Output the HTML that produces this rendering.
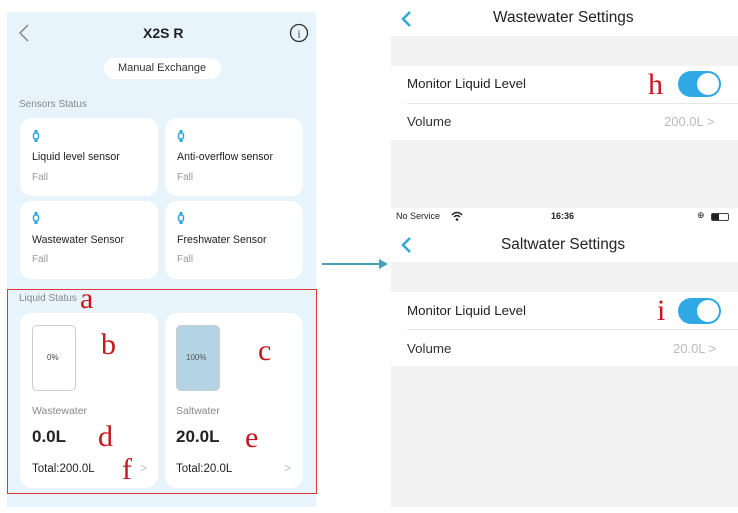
<!DOCTYPE html>
<html><head><style>
*{margin:0;padding:0;box-sizing:border-box}
body{width:738px;height:513px;background:#fff;position:relative;overflow:hidden;font-family:"Liberation Sans",sans-serif}
.a{position:absolute}
.lp{left:7px;top:12px;width:309px;height:495px;background:#e7f4fb}
.card{position:absolute;background:#fff;border-radius:12px}
.t{position:absolute;white-space:nowrap}
.ic{position:absolute;width:8px;height:12px}
.red{color:#c8161d;font-family:"Liberation Serif",serif;font-size:30px;position:absolute;line-height:1}
.g{background:#f2f2f2}
.row{position:absolute;left:391px;width:347px;background:#fff}
.tog{position:absolute;width:43px;height:26px;border-radius:13px;background:#2fa9e6}
.tog:after{content:"";position:absolute;right:2px;top:2px;width:22px;height:22px;border-radius:50%;background:#fff}
.sn{font-size:10.6px;color:#222}
</style></head><body>
<div class="a lp"></div>
<svg class="a" style="left:18px;top:24px" width="12" height="18"><path d="M10 1 L2 9 L10 17" stroke="#888" stroke-width="1.5" fill="none"/></svg>
<div class="t" style="left:143px;top:25px;font-size:14px;font-weight:bold;color:#222">X2S R</div>
<svg class="a" style="left:289px;top:23px" width="20" height="20"><circle cx="10" cy="10" r="8.5" stroke="#333" stroke-width="1.3" fill="none"/><text x="10" y="14.5" font-size="11" text-anchor="middle" font-family="Liberation Serif" fill="#333">i</text></svg>
<div class="a" style="left:104px;top:58px;width:117px;height:21px;background:#fff;border-radius:11px"></div>
<div class="t" style="left:118px;top:62px;font-size:11px;color:#333">Manual Exchange</div>
<div class="t" style="left:19px;top:99px;font-size:10px;color:#888">Sensors Status</div>

<div class="card" style="left:20px;top:118px;width:138px;height:78px"></div>
<div class="card" style="left:165px;top:118px;width:138px;height:78px"></div>
<div class="card" style="left:20px;top:201px;width:138px;height:78px"></div>
<div class="card" style="left:165px;top:201px;width:138px;height:78px"></div>

<svg class="ic" style="left:32px;top:130px"><rect x="1.5" y="3" width="5" height="6" rx="2" stroke="#2ea7dd" stroke-width="1.5" fill="none"/><rect x="2.5" y="0" width="3" height="3" fill="#2ea7dd"/><rect x="2.5" y="9.5" width="3" height="2.5" fill="#2ea7dd"/></svg>
<svg class="ic" style="left:177px;top:130px"><rect x="1.5" y="3" width="5" height="6" rx="2" stroke="#2ea7dd" stroke-width="1.5" fill="none"/><rect x="2.5" y="0" width="3" height="3" fill="#2ea7dd"/><rect x="2.5" y="9.5" width="3" height="2.5" fill="#2ea7dd"/></svg>
<svg class="ic" style="left:32px;top:212px"><rect x="1.5" y="3" width="5" height="6" rx="2" stroke="#2ea7dd" stroke-width="1.5" fill="none"/><rect x="2.5" y="0" width="3" height="3" fill="#2ea7dd"/><rect x="2.5" y="9.5" width="3" height="2.5" fill="#2ea7dd"/></svg>
<svg class="ic" style="left:177px;top:212px"><rect x="1.5" y="3" width="5" height="6" rx="2" stroke="#2ea7dd" stroke-width="1.5" fill="none"/><rect x="2.5" y="0" width="3" height="3" fill="#2ea7dd"/><rect x="2.5" y="9.5" width="3" height="2.5" fill="#2ea7dd"/></svg>

<div class="t sn" style="left:32px;top:151px">Liquid level sensor</div>
<div class="t sn" style="left:177px;top:151px">Anti-overflow sensor</div>
<div class="t" style="left:32px;top:172px;font-size:10px;color:#999">Fall</div>
<div class="t" style="left:177px;top:172px;font-size:10px;color:#999">Fall</div>
<div class="t sn" style="left:32px;top:234px">Wastewater Sensor</div>
<div class="t sn" style="left:177px;top:234px">Freshwater Sensor</div>
<div class="t" style="left:32px;top:254px;font-size:10px;color:#999">Fall</div>
<div class="t" style="left:177px;top:254px;font-size:10px;color:#999">Fall</div>

<div class="t" style="left:19px;top:293px;font-size:10px;color:#888">Liquid Status</div>
<div class="card" style="left:20px;top:313px;width:138px;height:175px"></div>
<div class="card" style="left:165px;top:313px;width:138px;height:175px"></div>
<div class="a" style="left:32px;top:325px;width:44px;height:66px;border:1.5px solid #ccc;border-radius:5px;background:#fff"></div>
<div class="t" style="left:47px;top:353px;font-size:8px;color:#444">0%</div>
<div class="a" style="left:176px;top:325px;width:44px;height:66px;border:1.5px solid #ccc;border-radius:5px;background:#b4d3e4"></div>
<div class="t" style="left:186px;top:353px;font-size:8px;color:#555">100%</div>
<div class="t" style="left:32px;top:405px;font-size:10.5px;color:#888">Wastewater</div>
<div class="t" style="left:176px;top:405px;font-size:10.5px;color:#888">Saltwater</div>
<div class="t" style="left:32px;top:427px;font-size:17px;font-weight:bold;color:#222">0.0L</div>
<div class="t" style="left:176px;top:427px;font-size:17px;font-weight:bold;color:#222">20.0L</div>
<div class="t" style="left:32px;top:463px;font-size:11.5px;color:#222">Total:200.0L</div>
<div class="t" style="left:176px;top:463px;font-size:11.5px;color:#222">Total:20.0L</div>
<div class="t" style="left:140px;top:461px;font-size:12px;color:#bbb">&gt;</div>
<div class="t" style="left:284px;top:461px;font-size:12px;color:#bbb">&gt;</div>
<div class="a" style="left:7px;top:289px;width:310px;height:205px;border:1.5px solid #d9373a"></div>
<div class="red" style="left:80px;top:284px">a</div>
<div class="red" style="left:101px;top:330px">b</div>
<div class="red" style="left:258px;top:336px">c</div>
<div class="red" style="left:98px;top:422px">d</div>
<div class="red" style="left:245px;top:423px">e</div>
<div class="red" style="left:122px;top:455px">f</div>

<div class="a" style="left:322px;top:263px;width:60px;height:1.5px;background:#4aa0b8"></div>
<svg class="a" style="left:379px;top:259px" width="9" height="10"><path d="M0 0 L9 5 L0 10 Z" fill="#4aa0b8"/></svg>

<!-- right top -->
<div class="a g" style="left:391px;top:36px;width:347px;height:172px"></div>
<svg class="a" style="left:400px;top:10px" width="12" height="18"><path d="M10 2 L3 9 L10 16" stroke="#2ea7dd" stroke-width="2.5" fill="none"/></svg>
<div class="t" style="left:493px;top:9px;font-size:15.4px;color:#222">Wastewater Settings</div>
<div class="row" style="top:66px;height:74px"></div>
<div class="a" style="left:407px;top:103px;width:331px;height:1px;background:#e6e6e6"></div>
<div class="t" style="left:407px;top:76px;font-size:13.3px;color:#222">Monitor Liquid Level</div>
<div class="t" style="left:407px;top:114px;font-size:13.3px;color:#333">Volume</div>
<div class="t" style="left:664px;top:114px;font-size:13px;color:#bbb">200.0L &gt;</div>
<div class="tog" style="left:678px;top:71px"></div>
<div class="red" style="left:648px;top:70px">h</div>

<!-- right bottom -->
<div class="t" style="left:396px;top:211px;font-size:9px;color:#222">No Service</div>
<svg class="a" style="left:451px;top:211px" width="12" height="10"><path d="M1 4 Q6 -1 11 4" stroke="#222" stroke-width="1.5" fill="none"/><path d="M3 6 Q6 3 9 6" stroke="#222" stroke-width="1.5" fill="none"/><circle cx="6" cy="8.5" r="1.3" fill="#222"/></svg>
<div class="t" style="left:551px;top:211px;font-size:9px;font-weight:bold;color:#222">16:36</div>
<div class="t" style="left:697px;top:210px;font-size:9px;color:#222">⊕</div>
<div class="a" style="left:711px;top:213px;width:18px;height:8px;border:1px solid #444;border-radius:2px"><div style="width:7px;height:6px;background:#222"></div></div>
<svg class="a" style="left:400px;top:236px" width="12" height="18"><path d="M10 2 L3 9 L10 16" stroke="#2ea7dd" stroke-width="2.5" fill="none"/></svg>
<div class="t" style="left:501px;top:236px;font-size:15.4px;color:#222">Saltwater Settings</div>
<div class="a g" style="left:391px;top:262px;width:347px;height:245px"></div>
<div class="row" style="top:292px;height:74px"></div>
<div class="a" style="left:407px;top:329px;width:331px;height:1px;background:#e6e6e6"></div>
<div class="t" style="left:407px;top:303px;font-size:13.3px;color:#222">Monitor Liquid Level</div>
<div class="t" style="left:407px;top:341px;font-size:13.3px;color:#333">Volume</div>
<div class="t" style="left:673px;top:341px;font-size:13px;color:#bbb">20.0L &gt;</div>
<div class="tog" style="left:678px;top:298px"></div>
<div class="red" style="left:657px;top:296px">i</div>
</body></html>
